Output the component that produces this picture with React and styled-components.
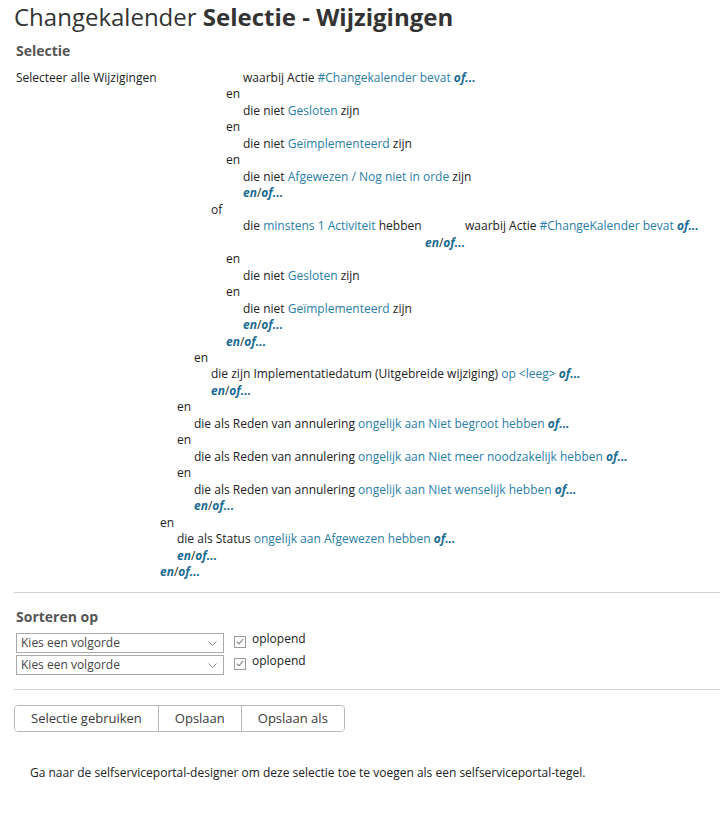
import React from "react";
import styled, { createGlobalStyle } from "styled-components";

const Global = createGlobalStyle`
  body {
    margin: 0;
    background: #fff;
    font-family: "Open Sans", "Liberation Sans", sans-serif;
    font-size: 12px;
    color: #222;
  }
`;

const Page = styled.div`
  padding: 2px 0 40px 16px;
`;

const Title = styled.h1`
  margin: 0 0 10px -2px;
  font-size: 24px;
  line-height: 29px;
  font-weight: 400;
  color: #333;
  b {
    font-weight: 700;
  }
`;

const SectionTitle = styled.h2`
  margin: 0;
  font-size: 14px;
  line-height: 19px;
  font-weight: 700;
  color: #555;
`;

const Tree = styled.div`
  margin-top: 10px;
  margin-bottom: 11px;
`;

const Line = styled.div`
  padding-left: ${p => p.$x - 16}px;
  line-height: 16.47px;
  white-space: nowrap;
`;

const Cell = styled.span`
  display: inline-block;
  width: ${p => p.$w}px;
`;

const Link = styled.span`
  color: #2a7ea6;
`;

const More = styled.span`
  color: #1b6b92;
  font-weight: 700;
  font-style: italic;
`;

const Rule = styled.hr`
  margin: 0 0 0 -2px;
  border: 0;
  border-top: 1px solid #d2d2d2;
`;

const SortBlock = styled.div`
  padding: 14px 0 14px;
  display: flex;
  flex-direction: column;
`;

const SortRows = styled.div`
  margin-top: 7px;
  display: flex;
  flex-direction: column;
  gap: 2px;
`;

const SortRow = styled.div`
  display: flex;
  align-items: flex-start;
`;

const SelectWrap = styled.div`
  position: relative;
  width: 208px;
  height: 20px;
`;

const Select = styled.select`
  appearance: none;
  width: 100%;
  height: 100%;
  box-sizing: border-box;
  border: 1px solid #a9a9a9;
  border-radius: 0;
  background: #fff;
  padding: 0 0 0 4px;
  font-family: inherit;
  font-size: 12px;
  color: #444;
`;

const Chevron = styled.svg`
  position: absolute;
  right: 7px;
  top: 8px;
  pointer-events: none;
`;

const Check = styled.span`
  margin: 3px 0 0 10px;
  width: 12px;
  height: 12px;
  box-sizing: border-box;
  border: 1px solid #9a9a9a;
  display: flex;
  align-items: center;
  justify-content: center;
`;

const CheckLabel = styled.span`
  margin: -2px 0 0 6px;
  line-height: 16px;
  color: #222;
`;

const Buttons = styled.div`
  margin: 15px 0 0 -2px;
  display: inline-flex;
  border: 1px solid #b8b8b8;
  border-radius: 4px;
  overflow: hidden;
`;

const Button = styled.button`
  height: 25px;
  padding: 0 16px;
  border: 0;
  border-left: ${p => (p.$first ? "0" : "1px solid #b8b8b8")};
  background: #fff;
  font-family: inherit;
  font-size: 13px;
  color: #3a3a3a;
`;

const Note = styled.p`
  margin: 33px 0 0 14px;
  line-height: 16px;
  color: #222;
`;

const SortLine = () => (
  <SortRow>
    <SelectWrap>
      <Select defaultValue="">
        <option value="">Kies een volgorde</option>
      </Select>
      <Chevron width="9" height="5" viewBox="0 0 9 5">
        <path d="M0.5 0.5 L4.5 4.5 L8.5 0.5" fill="none" stroke="#888" strokeWidth="1" />
      </Chevron>
    </SelectWrap>
    <Check>
      <svg width="8" height="7" viewBox="0 0 8 7">
        <path d="M0.8 3.6 L3 5.8 L7.2 1" fill="none" stroke="#777" strokeWidth="1.1" />
      </svg>
    </Check>
    <CheckLabel>oplopend</CheckLabel>
  </SortRow>
);

export default function App() {
  return (
    <Page>
      <Global />
      <Title>
        Changekalender <b>Selectie - Wijzigingen</b>
      </Title>
      <SectionTitle>Selectie</SectionTitle>
      <Tree>
        <Line $x={16}>
          <Cell $w={227}>Selecteer alle Wijzigingen</Cell>
          waarbij Actie <Link>#Changekalender bevat</Link> <More>of...</More>
        </Line>
        <Line $x={226}>en</Line>
        <Line $x={243}>die niet <Link>Gesloten</Link> zijn</Line>
        <Line $x={226}>en</Line>
        <Line $x={243}>die niet <Link>Geïmplementeerd</Link> zijn</Line>
        <Line $x={226}>en</Line>
        <Line $x={243}>die niet <Link>Afgewezen / Nog niet in orde</Link> zijn</Line>
        <Line $x={243}><More>en</More>/<More>of...</More></Line>
        <Line $x={211}>of</Line>
        <Line $x={243}>
          <Cell $w={222}>die <Link>minstens 1 Activiteit</Link> hebben</Cell>
          waarbij Actie <Link>#ChangeKalender bevat</Link> <More>of...</More>
        </Line>
        <Line $x={425}><More>en</More>/<More>of...</More></Line>
        <Line $x={226}>en</Line>
        <Line $x={243}>die niet <Link>Gesloten</Link> zijn</Line>
        <Line $x={226}>en</Line>
        <Line $x={243}>die niet <Link>Geïmplementeerd</Link> zijn</Line>
        <Line $x={243}><More>en</More>/<More>of...</More></Line>
        <Line $x={226}><More>en</More>/<More>of...</More></Line>
        <Line $x={194}>en</Line>
        <Line $x={211}>
          die zijn Implementatiedatum (Uitgebreide wijziging) <Link>op &lt;leeg&gt;</Link> <More>of...</More>
        </Line>
        <Line $x={211}><More>en</More>/<More>of...</More></Line>
        <Line $x={177}>en</Line>
        <Line $x={194}>
          die als Reden van annulering <Link>ongelijk aan Niet begroot hebben</Link> <More>of...</More>
        </Line>
        <Line $x={177}>en</Line>
        <Line $x={194}>
          die als Reden van annulering <Link>ongelijk aan Niet meer noodzakelijk hebben</Link> <More>of...</More>
        </Line>
        <Line $x={177}>en</Line>
        <Line $x={194}>
          die als Reden van annulering <Link>ongelijk aan Niet wenselijk hebben</Link> <More>of...</More>
        </Line>
        <Line $x={194}><More>en</More>/<More>of...</More></Line>
        <Line $x={160}>en</Line>
        <Line $x={177}>
          die als Status <Link>ongelijk aan Afgewezen hebben</Link> <More>of...</More>
        </Line>
        <Line $x={177}><More>en</More>/<More>of...</More></Line>
        <Line $x={160}><More>en</More>/<More>of...</More></Line>
      </Tree>
      <Rule />
      <SortBlock>
        <SectionTitle>Sorteren op</SectionTitle>
        <SortRows>
          <SortLine />
          <SortLine />
        </SortRows>
      </SortBlock>
      <Rule />
      <Buttons>
        <Button $first>Selectie gebruiken</Button>
        <Button>Opslaan</Button>
        <Button>Opslaan als</Button>
      </Buttons>
      <Note>
        Ga naar de selfserviceportal-designer om deze selectie toe te voegen als een selfserviceportal-tegel.
      </Note>
    </Page>
  );
}
